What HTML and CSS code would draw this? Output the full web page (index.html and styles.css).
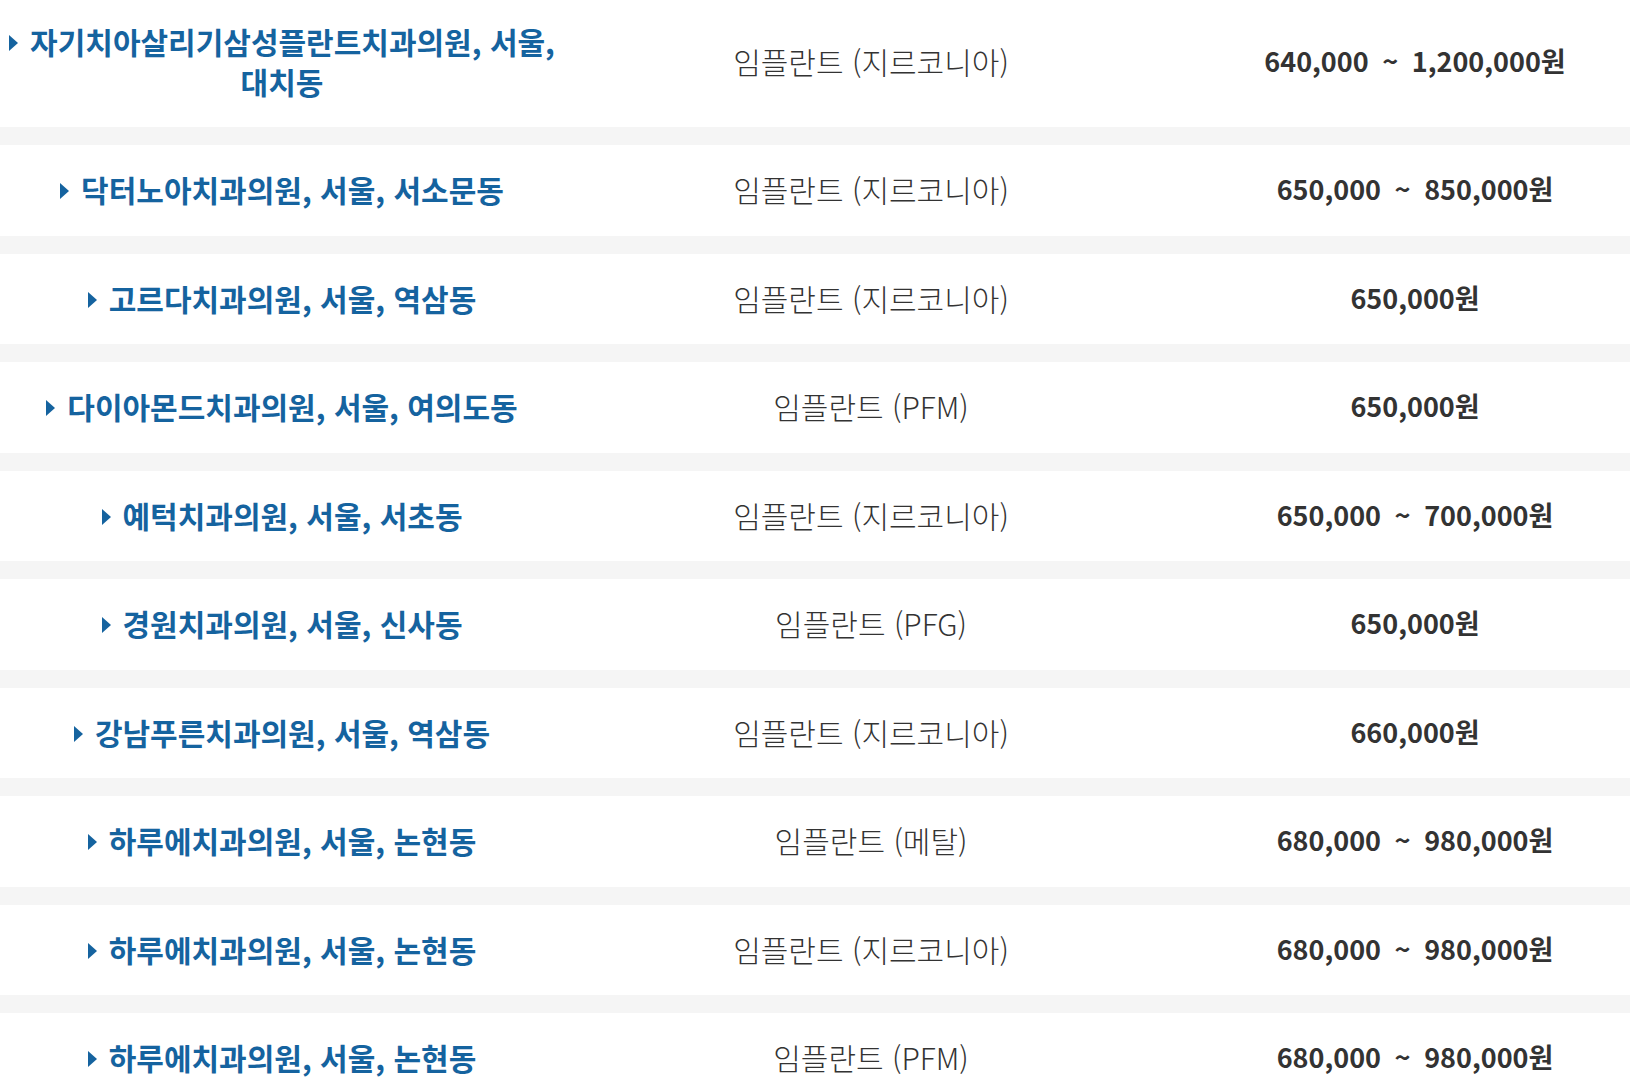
FILE: index.html
```html
<!DOCTYPE html>
<html lang="ko">
<head>
<meta charset="utf-8">
<title>임플란트 가격</title>
<link rel="stylesheet" href="styles.css">
</head>
<body>
<div class="list">
  <div class="row">
    <div class="cell name"><a class="clinic" href="#"><span class="arrow"></span>자기치아살리기삼성플란트치과의원, 서울, 대치동</a></div>
    <div class="cell item">임플란트 (지르코니아)</div>
    <div class="cell price">640,000 ~ 1,200,000원</div>
  </div>
  <div class="row">
    <div class="cell name"><a class="clinic" href="#"><span class="arrow"></span>닥터노아치과의원, 서울, 서소문동</a></div>
    <div class="cell item">임플란트 (지르코니아)</div>
    <div class="cell price">650,000 ~ 850,000원</div>
  </div>
  <div class="row">
    <div class="cell name"><a class="clinic" href="#"><span class="arrow"></span>고르다치과의원, 서울, 역삼동</a></div>
    <div class="cell item">임플란트 (지르코니아)</div>
    <div class="cell price">650,000원</div>
  </div>
  <div class="row">
    <div class="cell name"><a class="clinic" href="#"><span class="arrow"></span>다이아몬드치과의원, 서울, 여의도동</a></div>
    <div class="cell item">임플란트 (PFM)</div>
    <div class="cell price">650,000원</div>
  </div>
  <div class="row">
    <div class="cell name"><a class="clinic" href="#"><span class="arrow"></span>예턱치과의원, 서울, 서초동</a></div>
    <div class="cell item">임플란트 (지르코니아)</div>
    <div class="cell price">650,000 ~ 700,000원</div>
  </div>
  <div class="row">
    <div class="cell name"><a class="clinic" href="#"><span class="arrow"></span>경원치과의원, 서울, 신사동</a></div>
    <div class="cell item">임플란트 (PFG)</div>
    <div class="cell price">650,000원</div>
  </div>
  <div class="row">
    <div class="cell name"><a class="clinic" href="#"><span class="arrow"></span>강남푸른치과의원, 서울, 역삼동</a></div>
    <div class="cell item">임플란트 (지르코니아)</div>
    <div class="cell price">660,000원</div>
  </div>
  <div class="row">
    <div class="cell name"><a class="clinic" href="#"><span class="arrow"></span>하루에치과의원, 서울, 논현동</a></div>
    <div class="cell item">임플란트 (메탈)</div>
    <div class="cell price">680,000 ~ 980,000원</div>
  </div>
  <div class="row">
    <div class="cell name"><a class="clinic" href="#"><span class="arrow"></span>하루에치과의원, 서울, 논현동</a></div>
    <div class="cell item">임플란트 (지르코니아)</div>
    <div class="cell price">680,000 ~ 980,000원</div>
  </div>
  <div class="row">
    <div class="cell name"><a class="clinic" href="#"><span class="arrow"></span>하루에치과의원, 서울, 논현동</a></div>
    <div class="cell item">임플란트 (PFM)</div>
    <div class="cell price">680,000 ~ 980,000원</div>
  </div>
</div>
</body>
</html>
```
FILE: styles.css
```css
html, body {
  margin: 0;
  padding: 0;
  background: #ffffff;
  overflow: hidden;
}
body {
  font-family: "Noto Sans CJK KR", "Noto Sans", sans-serif;
  color: #333333;
}
.list {
  display: flex;
  flex-direction: column;
  gap: 18px;
  background: #f5f5f5;
  margin-top: -3.5px;
  width: 1652px;
}
.row {
  display: grid;
  grid-template-columns: 564px 614px 474px;
  align-items: center;
  background: #ffffff;
}
.cell {
  text-align: center;
  line-height: 40px;
  padding: 24px 0 26.5px;
  font-size: 27px;
  word-break: keep-all;
}
.name {
  font-size: 30px;
}
.clinic {
  color: #15639f;
  font-weight: 700;
  text-decoration: none;
}
.arrow {
  display: inline-block;
  width: 0;
  height: 0;
  border-top: 8px solid transparent;
  border-bottom: 8px solid transparent;
  border-left: 9px solid #15639f;
  margin-right: 12px;
  vertical-align: 3px;
}
.item {
  font-size: 30px;
  font-weight: 300;
  color: #333333;
}
.price {
  font-weight: 700;
  color: #333333;
  word-spacing: 6px;
}
```
